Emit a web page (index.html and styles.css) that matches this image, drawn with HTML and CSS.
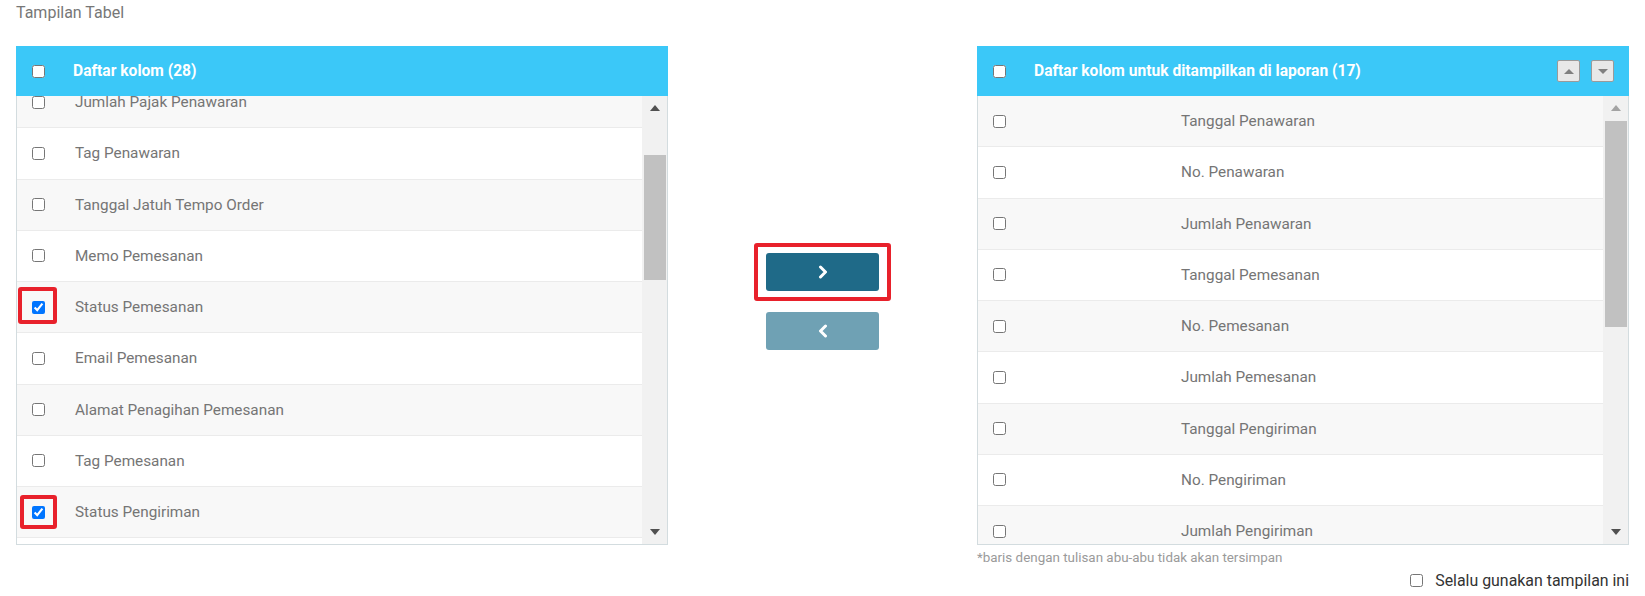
FILE: index.html
```html
<!DOCTYPE html>
<html lang="id">
<head>
<meta charset="utf-8">
<title>Tampilan Tabel</title>
<link rel="stylesheet" href="styles.css">
</head>
<body>
<div class="page">
  <div class="title">Tampilan Tabel</div>
  <div class="columns">
    <section class="panel">
      <header class="phead">
        <input type="checkbox" class="cb">
        <span class="phead-text">Daftar kolom (28)</span>
      </header>
      <div class="pbody">
        <div class="list list-left">
          <div class="row scrolled"><span class="cell-cb"><input type="checkbox" class="cb"></span><span class="txt">Jumlah Pajak Penawaran</span></div>
          <div class="row"><span class="cell-cb"><input type="checkbox" class="cb"></span><span class="txt">Tag Penawaran</span></div>
          <div class="row"><span class="cell-cb"><input type="checkbox" class="cb"></span><span class="txt">Tanggal Jatuh Tempo Order</span></div>
          <div class="row"><span class="cell-cb"><input type="checkbox" class="cb"></span><span class="txt">Memo Pemesanan</span></div>
          <div class="row"><span class="cell-cb"><span class="mark"><input type="checkbox" class="cb" checked></span></span><span class="txt">Status Pemesanan</span></div>
          <div class="row"><span class="cell-cb"><input type="checkbox" class="cb"></span><span class="txt">Email Pemesanan</span></div>
          <div class="row"><span class="cell-cb"><input type="checkbox" class="cb"></span><span class="txt">Alamat Penagihan Pemesanan</span></div>
          <div class="row"><span class="cell-cb"><input type="checkbox" class="cb"></span><span class="txt">Tag Pemesanan</span></div>
          <div class="row"><span class="cell-cb"><span class="mark mark2"><input type="checkbox" class="cb" checked></span></span><span class="txt">Status Pengiriman</span></div>
          <div class="row"><span class="cell-cb"><input type="checkbox" class="cb"></span><span class="txt">Alamat Pengiriman</span></div>
        </div>
        <div class="sb">
          <div class="sb-btn"><span class="tri-up"></span></div>
          <div class="sb-track"><div class="sb-thumb thumb-left"></div></div>
          <div class="sb-btn"><span class="tri-down"></span></div>
        </div>
      </div>
    </section>

    <div class="middle">
      <div class="mark-btn">
        <button class="mv mv-right" type="button" aria-label="Tambah">
          <svg width="10" height="14" viewBox="0 0 10 14"><polyline points="2.5,2 7.5,7 2.5,12" fill="none" stroke="#fff" stroke-width="3" stroke-linecap="round" stroke-linejoin="round"/></svg>
        </button>
      </div>
      <button class="mv mv-left" type="button" aria-label="Hapus">
        <svg width="10" height="14" viewBox="0 0 10 14"><polyline points="7.5,2 2.5,7 7.5,12" fill="none" stroke="#fff" stroke-width="3" stroke-linecap="round" stroke-linejoin="round"/></svg>
      </button>
    </div>

    <div class="rightcol">
      <section class="panel">
        <header class="phead">
          <input type="checkbox" class="cb">
          <span class="phead-text">Daftar kolom untuk ditampilkan di laporan (17)</span>
          <span class="order">
            <span class="obtn"><span class="otri-up"></span></span>
            <span class="obtn"><span class="otri-down"></span></span>
          </span>
        </header>
        <div class="pbody">
          <div class="list list-right">
            <div class="row"><span class="cell-cb"><input type="checkbox" class="cb"></span><span class="txt">Tanggal Penawaran</span></div>
            <div class="row"><span class="cell-cb"><input type="checkbox" class="cb"></span><span class="txt">No. Penawaran</span></div>
            <div class="row"><span class="cell-cb"><input type="checkbox" class="cb"></span><span class="txt">Jumlah Penawaran</span></div>
            <div class="row"><span class="cell-cb"><input type="checkbox" class="cb"></span><span class="txt">Tanggal Pemesanan</span></div>
            <div class="row"><span class="cell-cb"><input type="checkbox" class="cb"></span><span class="txt">No. Pemesanan</span></div>
            <div class="row"><span class="cell-cb"><input type="checkbox" class="cb"></span><span class="txt">Jumlah Pemesanan</span></div>
            <div class="row"><span class="cell-cb"><input type="checkbox" class="cb"></span><span class="txt">Tanggal Pengiriman</span></div>
            <div class="row"><span class="cell-cb"><input type="checkbox" class="cb"></span><span class="txt">No. Pengiriman</span></div>
            <div class="row"><span class="cell-cb"><input type="checkbox" class="cb"></span><span class="txt">Jumlah Pengiriman</span></div>
          </div>
          <div class="sb">
            <div class="sb-btn"><span class="tri-up tri-dis"></span></div>
            <div class="sb-track"><div class="sb-thumb thumb-right"></div></div>
            <div class="sb-btn"><span class="tri-down"></span></div>
          </div>
        </div>
      </section>
      <div class="note">*baris dengan tulisan abu-abu tidak akan tersimpan</div>
      <label class="always"><input type="checkbox" class="cb"> <span>Selalu gunakan tampilan ini</span></label>
    </div>
  </div>
</div>
</body>
</html>
```

FILE: styles.css
```css
* { box-sizing: border-box; }
html, body { margin: 0; padding: 0; background: #fff; }
body { font-family: Roboto, "Liberation Sans", Arial, sans-serif; color: #666; }

.page { padding: 0 16px; }
.title {
  height: 26px;
  line-height: 26px;
  font-size: 16px;
  color: #777;
  margin-bottom: 20px;
}

.columns { display: flex; align-items: flex-start; }
.panel { width: 652px; }
.rightcol { width: 652px; display: flex; flex-direction: column; }
.middle {
  flex: 1;
  display: flex;
  flex-direction: column;
  align-items: center;
  padding-top: 197px;
}

.cb { margin: 0; width: 13px; height: 13px; flex: none; }

.phead {
  height: 50px;
  background: #3bc8f8;
  display: flex;
  align-items: center;
  padding-left: 16px;
  color: #fff;
}
.phead-text {
  margin-left: 28px;
  font-weight: 700;
  font-size: 15.6px;
}
.order { margin-left: auto; margin-right: 15px; display: flex; gap: 11px; }
.obtn {
  width: 23px; height: 22px;
  background: #e8e8e8;
  border: 1px solid #9a9a9a;
  border-radius: 2px;
  display: flex; align-items: center; justify-content: center;
}
.otri-up, .otri-down { width: 0; height: 0; border-left: 5px solid transparent; border-right: 5px solid transparent; }
.otri-up { border-bottom: 5px solid #808080; }
.otri-down { border-top: 5px solid #808080; }

.pbody {
  height: 449px;
  border: 1px solid #d3dcdf;
  border-top: 0;
  display: flex;
  overflow: hidden;
}
.list { flex: 1; overflow: hidden; }
.row {
  height: 51.25px;
  border-bottom: 1px solid #ebebeb;
  display: flex;
  align-items: center;
  background: #fff;
  font-size: 15.3px;
  color: #757575;
}
.row:nth-child(odd) { background: #f8f8f8; }
.row.scrolled { margin-top: -19px; }
.cell-cb { width: 58px; padding-left: 15px; display: flex; align-items: center; flex: none; }
.list-right .cell-cb { width: 203px; }

.mark { position: relative; display: inline-flex; }
.mark::after {
  content: "";
  position: absolute;
  top: -14px; bottom: -10px; left: -14px; right: -12px;
  border: 4px solid #e8212b;
  border-radius: 3px;
}
.mark2::after { top: -11px; bottom: -10px; left: -12px; right: -12px; }

.sb {
  width: 25px;
  background: #f1f1f1;
  display: flex;
  flex-direction: column;
  flex: none;
}
.sb-btn { height: 24px; display: flex; align-items: center; justify-content: center; flex: none; }
.sb-track { flex: 1; padding: 0 1px 0 2px; }
.sb-thumb { background: #c1c1c1; }
.thumb-left { margin-top: 35px; height: 125px; }
.thumb-right { margin-top: 1px; height: 206px; }
.tri-up, .tri-down { width: 0; height: 0; border-left: 5.5px solid transparent; border-right: 5.5px solid transparent; }
.tri-up { border-bottom: 6px solid #505050; }
.tri-down { border-top: 6px solid #505050; }
.tri-up.tri-dis { border-bottom-color: #a3a3a3; }

.mark-btn {
  border: 4px solid #e8212b;
  border-radius: 3px;
  padding: 6px 8px;
}
.mv {
  width: 113px;
  height: 38px;
  border: 0;
  border-radius: 3px;
  display: flex;
  align-items: center;
  justify-content: center;
  padding: 0;
}
.mv-right { background: #1f6a88; }
.mv-left { background: #6fa1b4; margin-top: 11px; }

.note {
  margin-top: 4px;
  font-size: 13.4px;
  color: #9a9a9a;
  line-height: 17px;
}
.always {
  align-self: flex-end;
  display: flex;
  align-items: center;
  gap: 12px;
  margin-top: 5px;
  font-size: 15.9px;
  color: #333;
}
```
